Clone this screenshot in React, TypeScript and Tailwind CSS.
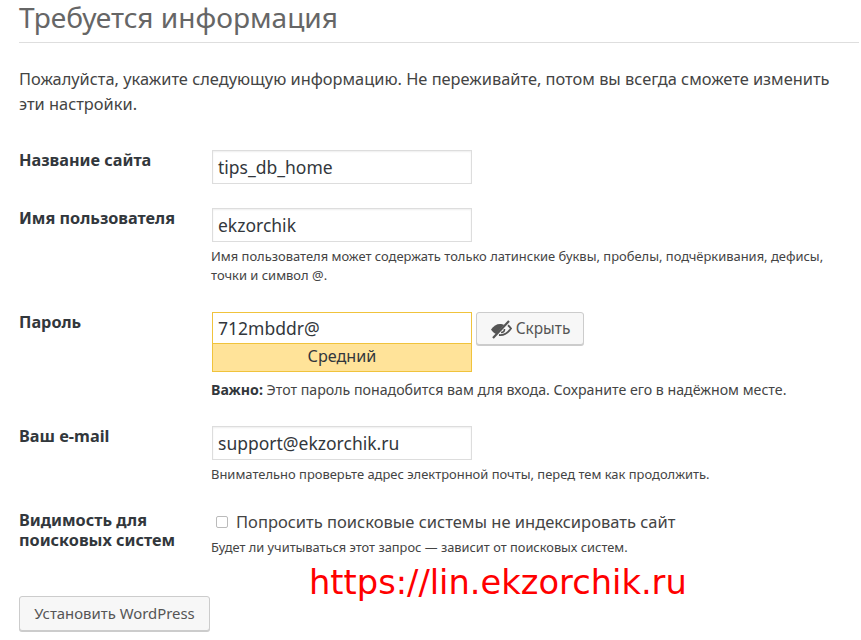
const font = "font-['Noto_Sans','Open_Sans',sans-serif]";

function Row({ label, children, className }: { label: React.ReactNode; children: React.ReactNode; className?: string }) {
  return (
    <div className={`flex ${className ?? ""}`}>
      <div className="w-[193px] shrink-0 text-[16.25px] leading-[20px] font-bold text-[#32373c]">{label}</div>
      <div className="min-w-0 flex-1">{children}</div>
    </div>
  );
}

function Field({ value }: { value: string }) {
  return (
    <div className="h-[34px] w-[260px] border border-[#ddd] bg-white px-[5px] text-[17.5px] leading-[32px] text-[#32373c] shadow-[inset_0_1px_2px_rgba(0,0,0,0.07)]">
      {value}
    </div>
  );
}

export default function App() {
  return (
    <div className={`relative h-[640px] w-[861px] overflow-hidden bg-white pl-[19px] pr-[2px] text-[#444] ${font}`}>
      <h1 className="h-[43px] border-b border-[#dedede] text-[28.1px] leading-[34px] text-[#666]">Требуется информация</h1>
      <p className="mt-[23px] text-[16.4px] leading-[25px] text-[#444]">
        Пожалуйста, укажите следующую информацию. Не переживайте, потом вы всегда сможете изменить
        <br />
        эти настройки.
      </p>

      <Row label="Название сайта" className="mt-[34px]">
        <Field value="tips_db_home" />
      </Row>

      <Row label="Имя пользователя" className="mt-[24px]">
        <Field value="ekzorchik" />
        <p className="mt-[5px] -ml-[1px] text-[12.95px] leading-[19px] text-[#444]">
          Имя пользователя может содержать только латинские буквы, пробелы, подчёркивания, дефисы,
          <br />
          точки и символ @.
        </p>
      </Row>

      <Row label="Пароль" className="mt-[27px]">
        <div className="flex items-start gap-[4px]">
          <div className="w-[260px] border border-[#f0c33c] text-[#32373c]">
            <div className="h-[31px] border-b border-[#f0c33c] bg-white px-[5px] text-[17.5px] leading-[30px]">712mbddr@</div>
            <div className="h-[27px] bg-[#ffe399] text-center text-[16.2px] leading-[25px]">Средний</div>
          </div>
          <button className="flex h-[33px] w-[108px] items-center justify-center gap-[4px] rounded-[3px] border border-[#ccc] bg-[#f7f7f7] text-[15.4px] text-[#555] shadow-[0_1px_0_#ccc]">
            <svg viewBox="0 0 22 22" className="h-[22px] w-[22px]" fill="none">
              <path d="M1 11.500C3.500 8 6.500 6 10 6c1.500 0 3 .4 4 1L6 16c-2-1-3.500-2.500-5-4.500z" fill="#555" />
              <path d="M9 17c4 .6 8.500-1.500 12-6.500-1-1.400-2-2.500-3-3.300" stroke="#555" strokeWidth="1.800" />
              <path d="M14.500 11c0 2-1.500 3.500-3.500 3.500" stroke="#555" strokeWidth="1.600" />
              <path d="M3 20 19 3" stroke="#555" strokeWidth="2.200" />
            </svg>
            Скрыть
          </button>
        </div>
        <p className="mt-[8px] -ml-[1px] text-[14.18px] leading-[19px] text-[#444]">
          <b className="text-[#32373c]">Важно:</b> Этот пароль понадобится вам для входа. Сохраните его в надёжном месте.
        </p>
      </Row>

      <Row label="Ваш e-mail" className="mt-[27px]">
        <Field value="support@ekzorchik.ru" />
        <p className="mt-[5px] -ml-[1px] text-[12.95px] leading-[19px] text-[#444]">
          Внимательно проверьте адрес электронной почты, перед тем как продолжить.
        </p>
      </Row>

      <Row
        label={
          <>
            Видимость для
            <br />
            поисковых систем
          </>
        }
        className="mt-[26px]"
      >
        <label className="mt-[2px] flex h-[20px] items-center pl-[4px] text-[16.5px] leading-[20px] text-[#444]">
          <span className="mr-[8px] h-[12px] w-[12px] rounded-[2px] border border-[#bbb] bg-white" />
          Попросить поисковые системы не индексировать сайт
        </label>
        <p className="mt-[6px] -ml-[1px] text-[12.85px] leading-[18px] text-[#444]">
          Будет ли учитываться этот запрос — зависит от поисковых систем.
        </p>
      </Row>

      <button className="mt-[40px] h-[35px] w-[191px] rounded-[3px] border border-[#ccc] bg-[#f7f7f7] text-[14.9px] text-[#555] shadow-[0_1px_0_#ccc]">
        Установить WordPress
      </button>

      <div className="absolute top-[561px] left-[309px] font-['DejaVu_Sans',sans-serif] text-[33.7px] leading-[44px] text-[#ff0000]">
        https://lin.ekzorchik.ru
      </div>
    </div>
  );
}
